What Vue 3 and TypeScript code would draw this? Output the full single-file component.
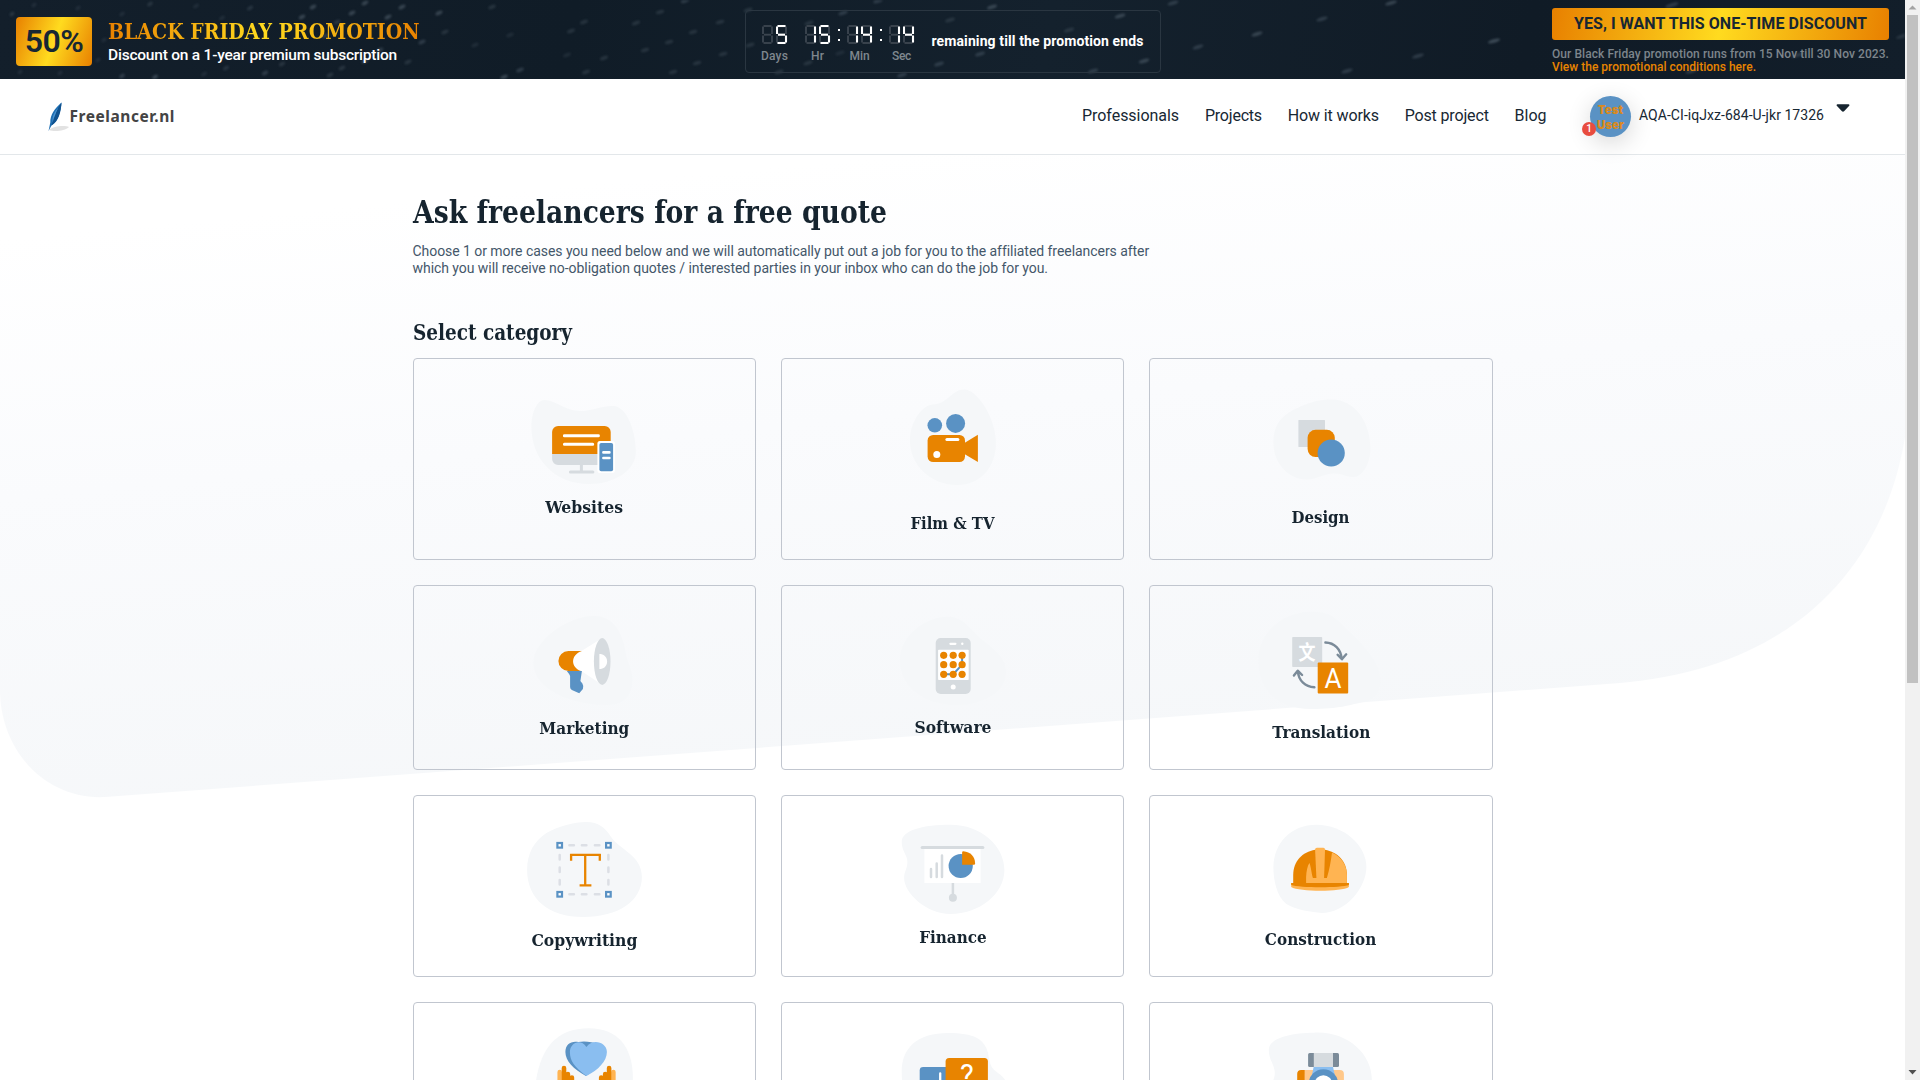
<script setup lang="ts">
import type { Directive } from 'vue'

interface Category {
  name: string
  width: number
  iconHeight: number
  art: string
}

// Fits a text to its set width: "glyphs" condenses the letters, otherwise the tracking is adjusted.
const vFit: Directive<HTMLElement, number> = {
  mounted(el, binding) {
    const natural = el.getBoundingClientRect().width
    if (binding.arg === 'glyphs') {
      el.style.transform = `scaleX(${binding.value / natural})`
    } else {
      const count = (el.textContent ?? '').trim().length
      el.style.letterSpacing = `${(binding.value - natural) / count}px`
    }
  },
}

const segmentPaths: Record<string, string> = {
  a: 'M1.5 1H9.5',
  b: 'M10 1.5V9',
  c: 'M10 10.5V17.5',
  d: 'M1.5 18H9.5',
  e: 'M1 10.5V17.5',
  f: 'M1 1.5V9',
  g: 'M2 9.7H9',
}
const lit: Record<string, string> = { '': '', '1': 'bc', '4': 'fgbc', '5': 'afgcd' }
const counters = [
  { label: 'Days', digits: ['', '5'], sep: false, width: 27 },
  { label: 'Hr', digits: ['1', '5'], sep: true, width: 13 },
  { label: 'Min', digits: ['1', '4'], sep: true, width: 20 },
  { label: 'Sec', digits: ['1', '4'], sep: false, width: 19 },
]

const nav = [
  { label: 'Professionals', width: 97 },
  { label: 'Projects', width: 57 },
  { label: 'How it works', width: 91 },
  { label: 'Post project', width: 84 },
  { label: 'Blog', width: 32 },
]

// x, y, brightness
const specks: number[][] = [
  [313, 7, 5], [302, 17, 5], [365, 3, 5], [352, 13, 5], [402, 7, 5], [388, 17, 5], [439, 13, 5],
  [265, 73, 4], [282, 64, 3], [300, 54, 3], [365, 61, 5], [380, 50, 4], [422, 42, 4], [122, 76, 4],
  [155, 77, 5], [408, 62, 3], [492, 7, 3], [445, 32, 3], [504, 77, 5], [520, 70, 4], [586, 72, 3],
  [604, 58, 3], [571, 31, 3], [584, 22, 3], [567, 55, 2], [510, 35, 2], [475, 45, 2], [636, 23, 3],
  [12, 14, 3], [34, 5, 2], [78, 8, 2], [122, 14, 2], [150, 4, 3], [196, 6, 2], [222, 18, 2], [250, 8, 3],
  [104, 40, 2], [98, 60, 2], [60, 73, 2], [20, 72, 2], [226, 68, 3], [204, 74, 2], [337, 22, 3],
  [325, 36, 4], [342, 68, 3], [330, 75, 3], [660, 12, 3], [685, 1, 4], [720, 22, 3], [693, 32, 3],
  [669, 42, 3], [645, 50, 3], [723, 54, 3], [697, 63, 3], [673, 72, 3], [748, 10, 3], [843, 13, 4],
  [878, 1, 4], [992, 7, 5], [950, 20, 3], [1069, 30, 3], [1120, 16, 5], [1173, 3, 4], [980, 54, 4],
  [939, 64, 4], [902, 75, 4], [779, 72, 3], [808, 63, 3], [840, 53, 2], [1093, 71, 4], [1144, 61, 5],
  [1198, 47, 4], [1257, 34, 5], [809, 23, 3], [750, 45, 3], [1391, 3, 5], [1322, 19, 4], [1494, 41, 6],
  [1418, 56, 4], [1347, 71, 4], [1672, 5, 4], [1692, 71, 4], [1798, 55, 4], [1903, 36, 3],
]

const O = '#e88400'
const L = '#ffb452'
const B = '#5a92c4'
const G = '#d6dbdf'
const S = '#7b8b99'

const dots = [162.3, 171.8, 180.7]
  .flatMap((x) => [70.3, 79.7, 89.3].map((y) => `<circle cx="${x}" cy="${y}" r="3.6" fill="${O}"/>`))
  .join('')
const handles = [146.3, 195]
  .flatMap((x) =>
    [50.3, 99.3].map(
      (y) => `<rect x="${x - 2.3}" y="${y - 2.3}" width="4.6" height="4.6" fill="#fff" stroke="${B}" stroke-width="2.2"/>`,
    ),
  )
  .join('')
const blob = (d: string) => `<path fill="#f5f7f9" d="${d}"/>`

const categories: Category[] = [
  {
    name: 'Websites', width: 78, iconHeight: 135.7,
    art: blob('M131 42C142 42 152 53 166 53C180 53 190 47 201 48C214 50 222 73 222.5 93C223 113 200 126 176 126C140 126 118 100 118 69C118 54 124 42 131 42Z') +
      `<path fill="${G}" d="M138.7 95.5H197.3V101a6 6 0 0 1-6 6H144.7a6 6 0 0 1-6-6Z"/><path fill="${O}" d="M138.7 96V74a6 6 0 0 1 6-6H191.3a6 6 0 0 1 6 6V96Z"/>
      <path d="M151 77.8H185M151 86.2H179.3" stroke="#fff" stroke-width="3" stroke-linecap="round"/>
      <path d="M168 107V114M157 114H179.5" stroke="${G}" stroke-width="3" stroke-linecap="round"/>
      <rect x="184" y="83" width="17.5" height="32" rx="2.5" fill="#fff"/><rect x="186" y="85" width="13.7" height="28.3" rx="1.8" fill="${B}"/>
      <path d="M190 94.4H196M190 100H196" stroke="#fff" stroke-width="2.6" stroke-linecap="round"/>`,
  },
  {
    name: 'Film & TV', width: 84, iconHeight: 152,
    art: blob('M183 31.5C195 31.5 214 58 214.5 84C215 110 198 127 176 127C150 127 128.5 108 128.5 82C128.5 66 139 48 151 46.5C167 46 170 31.5 183 31.5Z') +
      `<circle cx="153.4" cy="67.3" r="7.3" fill="${B}"/><circle cx="174.2" cy="65.4" r="9.5" fill="${B}"/>
      <rect x="146.2" y="77" width="37.4" height="27" rx="5.5" fill="${O}"/><path fill="${O}" d="M183 85L196.5 76.7V104L183 96Z"/>
      <path d="M165.5 81.4H176.5" stroke="#fff" stroke-width="3" stroke-linecap="round"/><circle cx="155.4" cy="96.5" r="3.5" fill="#fff"/>`,
  },
  {
    name: 'Design', width: 58, iconHeight: 145.7,
    art: blob('M182 41.5C207 41.5 221 66 221 90C221 106 213 119 204 119C196 119 194 115.5 184.5 115.5C173 115.5 169 121.5 157 121.5C140 121.5 124 106 124 85C124 62 137 55 150 49C161 44 171 41.5 182 41.5Z') +
      `<rect x="149" y="62" width="26.6" height="27" rx=".6" fill="${G}"/><rect x="158.2" y="71.8" width="27.2" height="27.2" rx="8" fill="${O}"/><circle cx="181.8" cy="95" r="13.6" fill="${B}"/>`,
  },
  {
    name: 'Marketing', width: 90, iconHeight: 130,
    art: blob('M181 31C200 31 209 48 212 66C214 80 222 88 218 103C215 116 205 120 193 120C160 120 120 105 120 78C120 55 155 31 181 31Z') +
      `<path fill="#fff" d="M168 66L189 53V100L168 86C156 84 156 68 168 66Z"/><path fill="${O}" d="M168.5 66H155A10 10 0 0 0 155 86H167.5C157 82 157 70 168.5 66Z"/>
      <ellipse cx="188.8" cy="76.5" rx="8.3" ry="23.4" fill="${G}"/><path fill="#fff" d="M186 69C190 69 193.7 71.5 193.7 76.5C193.7 81.5 190 84 186 84Z"/>
      <path fill="${B}" d="M153.4 86H168.5L167 96L169 98.5Q170.5 101 169.5 104L165.8 108.3L158.5 105Q156.7 104 156.7 102V91Q156 89 153.4 86Z"/>`,
  },
  {
    name: 'Software', width: 77, iconHeight: 128.7,
    art: blob('M166.6 31.7C179 31.7 186 40 192.5 47C204 60 224.6 68 224.6 87C224.6 108 200 120 176 120C145 120 118.5 104 118.5 75C118.5 50 145 31.7 166.6 31.7Z') +
      `<rect x="154.3" y="53" width="35" height="56" rx="5" fill="${G}"/><rect x="156.7" y="64.7" width="30.6" height="30.3" rx=".8" fill="#fff"/>
      <path d="M169 58.8H174" stroke="#fff" stroke-width="2.2" stroke-linecap="round"/><circle cx="180.9" cy="58.8" r="1.2" fill="#fff"/><circle cx="171.8" cy="102" r="2.5" fill="#fff"/>
      <path d="M180.7 70V79.7L171.8 89.3H162.3" stroke="${B}" stroke-width="2" fill="none"/>${dots}`,
  },
  {
    name: 'Translation', width: 98, iconHeight: 133.7,
    art: blob('M162 26.7C178 26.7 184 31 190 37C202 50 231 72 231 95C231 111 222 115 214 117C200 120 190 124 162 124C127 124 109 104 109 75C109 46 135 26.7 162 26.7Z') +
      `<rect x="142.8" y="52" width="30" height="30" rx=".8" fill="${G}"/><rect x="168.3" y="77.5" width="30.5" height="31" rx="1" fill="${O}"/>
      <text x="157.7" y="75" font-family="Noto Sans CJK SC, sans-serif" font-size="20" font-weight="700" fill="#fff" text-anchor="middle" textLength="17" lengthAdjust="spacingAndGlyphs">文</text>
      <text x="183.6" y="103" font-family="Roboto, sans-serif" font-size="27.5" font-weight="400" fill="#fff" text-anchor="middle" textLength="17" lengthAdjust="spacingAndGlyphs">A</text>
      <g fill="none" stroke="${S}" stroke-width="2.4" stroke-linecap="round" stroke-linejoin="round"><path d="M176 57.5C185 57.8 191.5 64 192.3 74M188.2 69.8L192.5 74.3L196.8 69.3"/><path d="M165 102.3C156 101.5 149 96 148.5 86M144.5 90.5L148.3 85.7L152.7 90"/></g>`,
  },
  {
    name: 'Copywriting', width: 106, iconHeight: 131.7,
    art: blob('M173 27C185 27 192 33 197 41C206 55 228.5 60 228.5 82C228.5 106 205 122 170 122C135 122 113.7 104 113.7 75C113.7 58 121 46 133 38C146 31 160 27 173 27Z') +
      `<path d="M156 50.3H160.5M168.5 50.3H173M181.5 50.3H186M156 99.3H160.5M168.5 99.3H173M181.5 99.3H186M146.3 60V64.5M146.3 72.5V77M146.3 85V89.5M195 60V64.5M195 72.5V77M195 85V89.5" stroke="#dcdfe5" stroke-width="2.5" stroke-linecap="round"/>${handles}
      <g stroke="${O}" stroke-width="2.3"><line x1="156.7" x2="187.4" y1="59.8" y2="59.8"/><line x1="157.7" x2="157.7" y1="59" y2="65.7"/><line x1="186.4" x2="186.4" y1="59" y2="65.7"/><line x1="171.8" x2="171.8" y1="60" y2="90"/><line x1="166.2" x2="178" y1="90.3" y2="90.3"/></g>`,
  },
  {
    name: 'Finance', width: 67.5, iconHeight: 128.7,
    art: blob('M169 29.7C200 29.7 223 51 223 75C223 99 198 119 169 119C145 119 122.7 98 122.7 83C122.7 76 126 74 126 66.7C126 60 120.3 56 120.3 47C120.3 35 142 29.7 169 29.7Z') +
      `<rect x="143" y="53" width="56.2" height="35" fill="#fff"/><path d="M140.7 52.4H201.5" stroke="${G}" stroke-width="3" stroke-linecap="round"/>
      <path d="M149.6 74V82M155.3 68.5V82M160.6 60.5V82" stroke="${G}" stroke-width="2.5" stroke-linecap="round"/><path d="M171.5 88V102" stroke="${G}" stroke-width="2.5"/><circle cx="171.5" cy="102.8" r="4" fill="${G}"/>
      <circle cx="179.3" cy="71" r="12.1" fill="${B}"/><path fill="${O}" d="M180.7 57.5Q180.7 56.3 182 56.3C189 57 193.7 61.5 193.7 68.5Q193.7 69.7 192.5 69.7H180.7Z"/>`,
  },
  {
    name: 'Construction', width: 111.5, iconHeight: 130.7,
    art: blob('M167 29.7C194 29.7 217 50 217 72C217 92 197 118 172 118C163 117 146 115 137 109C127 101 124 85 124 72C124 49 141 29.7 167 29.7Z') +
      `<path fill="${O}" d="M143.8 89V80C143.8 66 153 57 165.7 54.7H175.6C188 57 197.5 66 197.5 80V89Z"/>
      <path fill="${L}" d="M182.6 57.5C192 62 197.5 70 197.5 80V88H156.7V82C157 76 158 71 160 68C161.5 71 162 78 163.5 83H177.5C180 75 181.5 66 182.6 57.5Z"/>
      <path fill="${L}" d="M165.7 54.5Q165.7 52.8 167.5 52.8H174Q175.6 52.8 175.6 54.5L174.7 83H167Z"/>
      <path fill="${L}" d="M141.8 88H199.5V92C192 97 150 97 141.8 92Z"/><path fill="${O}" d="M141.8 88H199.5V90C192 93 150 93 141.8 90Z"/>`,
  },
  {
    name: '', width: 0, iconHeight: 132,
    art: blob('M175.5 26.3C205 26.3 219.5 46 219.5 76C219.5 108 205 122 172 122C137 122 122.7 108 122.7 78C128 46 143 26.3 175.5 26.3Z') +
      `<path fill="${B}" d="M172.5 74C160 67 152 59 152 50C152 42 158 38.5 165 40C175 38 191 42 191 50C191 59 184 67 172.5 74Z"/>
      <path fill="#8abef0" d="M173 74C161 65 156.5 59 156.5 50C156.5 41 167 36 173 45C179 36 193.5 40 193.5 50C193.5 59 185 68 173 74Z"/>
      <path d="M146.3 70V82M200 70V82" stroke="${L}" stroke-width="4.5" stroke-linecap="round"/><path d="M150.6 66V82M154.5 72V82M158.5 75.5V84M195.7 66V82M191.8 72V82M187.8 75.5V84" stroke="${O}" stroke-width="4.6" stroke-linecap="round"/>`,
  },
  {
    name: '', width: 0, iconHeight: 132,
    art: blob('M166.6 31C193 31 203 37 206.7 51C208 60 209 65 214 69C221 74 226 78 226 87C226 110 200 122 170 122C138 122 120.3 104 120.3 70C120.3 45 137 31 166.6 31Z') +
      `<rect x="138.3" y="65" width="42" height="40" rx="3.5" fill="${B}"/><path d="M158.8 71.5V90" stroke="#fff" stroke-width="2.3" stroke-linecap="round"/>
      <rect x="164.2" y="56" width="42.3" height="40" rx="3.5" fill="${O}"/><text x="185.5" y="83" font-family="Roboto, sans-serif" font-size="29" fill="#fff" text-anchor="middle">?</text>`,
  },
  {
    name: '', width: 0, iconHeight: 132,
    art: blob('M164.7 30.7C198 29 222.4 52 222.4 77C222.4 103 198 121 169 121C143 121 122 100 122 86C122 79 125.4 78 125.4 71C125.4 63 119.4 58 119.4 48C119.4 36 141 31 164.7 30.7Z') +
      `<rect x="150" y="68" width="44.5" height="34" rx="4" fill="#ffc88a"/><path fill="${O}" d="M155.2 68V102H147.8V72Q147.8 68 151.8 68Z"/>
      <rect x="158.7" y="51" width="30.9" height="14" rx="1.5" fill="${S}"/><rect x="164.4" y="51" width="19.2" height="14" fill="${G}"/>
      <path fill="#8abef0" d="M164.3 65H183.6L188 84H160Z"/><circle cx="174" cy="82" r="14.7" fill="${B}"/><circle cx="174" cy="82" r="8.8" fill="#fff"/>`,
  },
]
</script>

<template>
  <div class="window">
    <div class="page">
      <svg class="backdrop" viewBox="0 0 1905 1080" width="1905" height="1080">
        <defs>
          <linearGradient id="haze" gradientUnits="userSpaceOnUse" x1="900" y1="155" x2="960" y2="797">
            <stop offset="0" stop-color="#fff" /><stop offset=".4" stop-color="#fafbfd" /><stop offset="1" stop-color="#f5f7f9" />
          </linearGradient>
        </defs>
        <path fill="url(#haze)" d="M0 155H1905V437C1885 560 1800 668 1620 683L105 797C45 800 0 750 0 690Z" />
      </svg>

      <div class="promo">
        <svg class="specks" width="1905" height="79" viewBox="0 0 1905 79">
          <ellipse
            v-for="([x, y, b], i) in specks" :key="i" :cx="x" :cy="y" :rx="2.8 + x / 420" ry="1.9"
            fill="#8797a5" :opacity="b * 0.062" :transform="`rotate(${x < 640 ? -40 + x / 30 : -17} ${x} ${y})`"
          />
        </svg>
        <div class="offer">
          <div class="percent"><span v-fit="58.5">50%</span></div>
          <div class="offer-text">
            <div class="offer-title"><span v-fit:glyphs="311.5">BLACK FRIDAY PROMOTION</span></div>
            <div class="offer-sub"><span v-fit="289">Discount on a 1-year premium subscription</span></div>
          </div>
        </div>
        <div class="countdown">
          <template v-for="c in counters" :key="c.label">
            <div class="counter">
              <div class="digits">
                <svg v-for="(d, i) in c.digits" :key="i" width="12" height="19" viewBox="0 0 12 19">
                  <path v-for="(p, s) in segmentPaths" :key="s" :d="p" fill="none" stroke-width="1.9" stroke="#3b454f" />
                  <path v-for="s in lit[d]" :key="'on' + s" :d="segmentPaths[s]" fill="none" stroke-width="2.1" stroke="#fff" />
                </svg>
              </div>
              <div class="unit"><span v-fit="c.width">{{ c.label }}</span></div>
            </div>
            <div class="sep" :class="{ wide: c.label === 'Days' }"><template v-if="c.sep"><i /><i /></template></div>
          </template>
          <div class="remaining"><span v-fit="212">remaining till the promotion ends</span></div>
        </div>
        <div class="action">
          <button class="cta"><span v-fit="293">YES, I WANT THIS ONE-TIME DISCOUNT</span></button>
          <div class="terms"><span v-fit="337">Our Black Friday promotion runs from 15 Nov till 30 Nov 2023.</span></div>
          <div class="terms link"><span v-fit="204">View the promotional conditions here.</span></div>
        </div>
      </div>

      <header class="header">
        <div class="logo">
          <svg width="24" height="30" viewBox="0 0 24 30">
            <path d="M1 28C5 24 17 23 21 25C17 29 6 30 1 28Z" fill="#e2e2e2" />
            <path d="M13.5 .5C7 6 2 13 2.3 20.5L.5 29L3.5 23.5C10 20 13 9 13.5 .5Z" fill="#1f6fb3" />
            <path d="M13.5 .5C8 9 5 16 3.5 23.5C11 19 13 9 13.5 .5Z" fill="#10528f" />
            <path d="M4.5 17C5 13 7 9 10 6C8 11 6 15 4.5 21Z" fill="#4a93d0" />
          </svg>
          <div class="brand"><span v-fit="105.5">Freelancer.nl</span></div>
        </div>
        <nav class="nav">
          <a v-for="n in nav" :key="n.label"><span v-fit="n.width">{{ n.label }}</span></a>
        </nav>
        <div class="account">
          <div class="avatar">
            <div class="initials">Test<br />User</div>
            <div class="badge">1</div>
          </div>
          <div class="user"><span v-fit="185">AQA-CI-iqJxz-684-U-jkr 17326</span></div>
          <svg class="caret" width="14" height="8" viewBox="0 0 14 8"><path d="M1.5 .3H12.5Q14 .8 13 2L8.3 7Q7 8.3 5.7 7L1 2Q0 .8 1.5 .3Z" fill="#16242f" /></svg>
        </div>
      </header>

      <main class="content">
        <h1><span v-fit:glyphs="474">Ask freelancers for a free quote</span></h1>
        <div class="intro"><span v-fit="735.5">Choose 1 or more cases you need below and we will automatically put out a job for you to the affiliated freelancers after</span></div>
        <div class="intro"><span v-fit="635.5">which you will receive no-obligation quotes / interested parties in your inbox who can do the job for you.</span></div>
        <h2><span v-fit:glyphs="159">Select category</span></h2>
        <div class="grid">
          <div v-for="(c, i) in categories" :key="i" class="card">
            <svg width="341.33" :height="c.iconHeight" :viewBox="`.6 1 341.33 ${c.iconHeight}`" v-html="c.art" />
            <h3 v-if="c.name"><span v-fit:glyphs="c.width">{{ c.name }}</span></h3>
          </div>
        </div>
      </main>
    </div>
    <div class="scrollbar">
      <svg width="15" height="15" viewBox="0 0 15 15"><path d="M3.5 9.5L7.5 5.5L11.5 9.5Z" fill="#a3a3a3" /></svg>
      <div class="thumb" />
      <svg width="15" height="15" viewBox="0 0 15 15"><path d="M3.5 5L7.5 9.5L11.5 5Z" fill="#505050" /></svg>
    </div>
  </div>
</template>

<style>
html, body { margin: 0; overflow: hidden; background: #fff; }
</style>

<style scoped>
.window { display: flex; width: 1920px; height: 1080px; overflow: hidden; font-family: Roboto, "Liberation Sans", sans-serif; color: #172733; }
.window * { box-sizing: border-box; }
span { display: inline-block; white-space: nowrap; }
.page { position: relative; width: 1905px; height: 1080px; overflow: hidden; }
.backdrop { position: absolute; left: 0; top: 0; }
svg { display: block; flex: none; }

.promo { position: relative; display: flex; height: 79px; background: linear-gradient(100deg, #131f2b, #101c27 30%, #14212d 55%, #101b26 80%, #121e2a); overflow: hidden; }
.specks { position: absolute; left: 0; top: 0; filter: blur(1px); }
.offer { position: relative; display: flex; flex: none; gap: 16px; width: 744.5px; padding: 17px 0 0 16px; }
.percent { width: 76px; height: 49px; border-radius: 4px; background: linear-gradient(110deg, #e88000, #ffdb1f 50%, #e88000); font-size: 32px; font-weight: 600; line-height: 48px; text-align: center; }
.offer-text { display: flex; flex-direction: column; }
.offer-title { height: 28px; line-height: 27px; font-family: "Roboto Slab", "DejaVu Serif Condensed", "DejaVu Serif", serif; font-size: 23px; }
.offer-title span { transform-origin: left; font-weight: 700; color: transparent; background: linear-gradient(100deg, #e88000, #ffdb1f 50%, #e88000); background-clip: text; -webkit-background-clip: text; }
.offer-sub { height: 20px; line-height: 20px; font-size: 15.5px; font-weight: 500; color: #fff; }
.countdown { position: relative; display: flex; flex: none; width: 416px; height: 63px; margin-top: 10px; padding: 14px 0 0 16px; border: 1px solid #2a3641; border-radius: 4px; }
.counter { display: flex; flex-direction: column; width: 26px; }
.digits { display: flex; gap: 2px; }
.unit { display: flex; justify-content: center; height: 16px; margin-top: 4px; font-size: 12px; font-weight: 500; line-height: 16px; color: #7f878e; }
.sep { display: flex; flex-direction: column; gap: 8px; align-items: center; width: 16px; padding-top: 4px; }
.sep.wide { width: 17px; }
.sep i { width: 2px; height: 2px; background: #fff; }
.remaining { margin-top: 7px; margin-left: 1px; font-size: 14px; font-weight: 700; line-height: 19px; color: #fff; }
.action { position: relative; width: 744.5px; padding: 8px 0 0 391.5px; }
.cta { display: block; width: 337px; height: 32px; padding: 0; border: 0; border-radius: 3px; background: linear-gradient(100deg, #e88000, #ffdb1f 50%, #e88000); font-family: inherit; font-size: 16px; font-weight: 700; line-height: 32px; color: #172733; }
.terms { height: 13px; font-size: 12px; line-height: 13px; color: #7d858c; font-weight: 500; }
.cta + .terms { margin-top: 8px; }
.terms.link { color: #e88400; }

.header { position: relative; display: flex; height: 76px; padding-left: 48px; background: #fff; border-bottom: 1px solid #e3e7ea; }
.logo { display: flex; width: 1034px; padding-top: 23px; }
.brand { margin-left: -2.5px; font-family: "Noto Sans", "Open Sans", sans-serif; font-size: 15.5px; font-weight: 700; line-height: 20px; padding-top: 4px; color: #444; }
.nav { display: flex; gap: 25.9px; width: 508px; font-size: 16px; line-height: 20px; padding-top: 27px; }
.account { display: flex; }
.avatar { position: relative; width: 41px; height: 41px; margin-top: 17px; border-radius: 50%; background: #5a92c4; box-shadow: 0 6px 24px rgba(0, 0, 0, .16); }
.initials { padding-top: 7px; font-family: Inter, sans-serif; font-size: 11.5px; font-weight: 900; line-height: 15px; text-align: center; color: #d98a1e; }
.badge { position: absolute; left: -8px; top: 26px; width: 14px; height: 14px; border-radius: 50%; background: #e84c3f; font-size: 10px; font-weight: 500; line-height: 14px; text-align: center; color: #fff; }
.user { width: 197px; margin-left: 8px; padding-top: 26px; font-size: 14px; line-height: 20px; }
.caret { margin-top: 25px; }

.content { position: relative; width: 1080px; margin: 0 auto; padding-top: 35px; }
h1, h2, h3 { margin: 0; font-family: "Roboto Slab", "DejaVu Serif Condensed", "DejaVu Serif", serif; font-weight: 700; color: #16242f; }
h1 { height: 44px; font-size: 31.5px; line-height: 43px; }
h1 span, h2 span { transform-origin: left; }
.intro { height: 17px; font-size: 14px; line-height: 17px; color: #44576a; }
h1 + .intro { margin-top: 9px; }
h2 { height: 30px; margin-top: 40px; font-size: 22px; line-height: 30px; }
.grid { display: grid; grid-template-columns: repeat(3, 1fr); grid-template-rows: 202px 185px 182.4px 185px; gap: 25px; margin-top: 11px; }
.card { border: 1px solid #c1c6cf; border-radius: 4px; overflow: hidden; }
h3 { height: 24px; font-size: 17.5px; line-height: 24px; text-align: center; }

.scrollbar { display: flex; flex-direction: column; justify-content: space-between; width: 15px; height: 1080px; background: #f1f1f1; }
.thumb { width: 11px; height: 668px; margin: 0 2px 382px; background: #c1c1c1; }
</style>
